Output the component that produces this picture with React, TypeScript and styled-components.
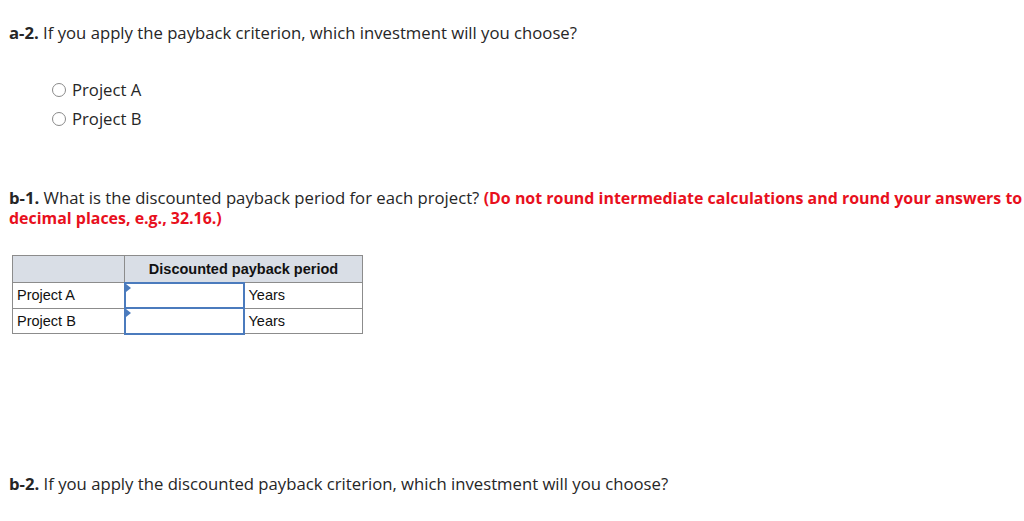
import styled, { createGlobalStyle } from "styled-components";

const GlobalStyle = createGlobalStyle`
  html, body {
    margin: 0;
    padding: 0;
    background: #fff;
    overflow: hidden;
  }
  body {
    font-family: "Open Sans", "Noto Sans", sans-serif;
    color: #262626;
  }
`;

const Page = styled.div`
  width: 1040px;
  padding: 23px 0 0 9px;
`;

const Question = styled.p<{ gap?: number }>`
  margin: 0;
  font-size: 16.7px;
  line-height: 20px;
  margin-top: ${props => props.gap ?? 0}px;
  b {
    font-weight: 700;
  }
`;

const Hint = styled.span`
  color: #e8101d;
  font-weight: 700;
  font-size: 15.94px;
`;

const Choices = styled.div`
  display: flex;
  flex-direction: column;
  gap: 9px;
  padding: 37px 0 0 43px;
`;

const Choice = styled.label`
  display: flex;
  align-items: center;
  gap: 6px;
  font-size: 16.7px;
  line-height: 20px;
`;

const Radio = styled.span`
  width: 14px;
  height: 14px;
  border-radius: 50%;
  border: 1px solid #8a8a8a;
  box-sizing: border-box;
  background: #fff;
`;

const Table = styled.table`
  border-collapse: collapse;
  table-layout: fixed;
  width: 350px;
  margin: 27px 0 0 3px;
  font-family: "Liberation Sans", Arial, sans-serif;
  font-size: 14.5px;
  color: #111;
  td, th {
    border: 1px solid #8c8c8c;
    padding: 0 0 0 4px;
    height: 25.5px;
    box-sizing: border-box;
    text-align: left;
  }
  th {
    height: 27px;
    padding: 0;
    background: #d9dee6;
    font-weight: 700;
    text-align: center;
  }
`;

const InputCell = styled.td`
  position: relative;
  && {
    padding: 0;
    border: 2px solid #4b7bbd;
  }
  &::before {
    content: "";
    position: absolute;
    left: 0;
    top: 0;
    border-left: 5px solid #4b7bbd;
    border-top: 4px solid transparent;
    border-bottom: 4px solid transparent;
  }
`;

const rows = ["Project A", "Project B"];

export default function App() {
  return (
    <>
      <GlobalStyle />
      <Page>
        <Question>
          <b>a-2.</b> If you apply the payback criterion, which investment will you choose?
        </Question>
        <Choices>
          {rows.map(r => (
            <Choice key={r}>
              <Radio />
              {r}
            </Choice>
          ))}
        </Choices>
        <Question gap={59}>
          <b>b-1.</b> What is the discounted payback period for each project?{" "}
          <Hint>(Do not round intermediate calculations and round your answers to 2 decimal places, e.g., 32.16.)</Hint>
        </Question>
        <Table>
          <colgroup>
            <col style={{ width: 112 }} />
            <col style={{ width: 119 }} />
            <col style={{ width: 119 }} />
          </colgroup>
          <thead>
            <tr>
              <th></th>
              <th colSpan={2}>Discounted payback period</th>
            </tr>
          </thead>
          <tbody>
            {rows.map(r => (
              <tr key={r}>
                <td>{r}</td>
                <InputCell />
                <td>Years</td>
              </tr>
            ))}
          </tbody>
        </Table>
        <Question gap={139}>
          <b>b-2.</b> If you apply the discounted payback criterion, which investment will you choose?
        </Question>
      </Page>
    </>
  );
}
